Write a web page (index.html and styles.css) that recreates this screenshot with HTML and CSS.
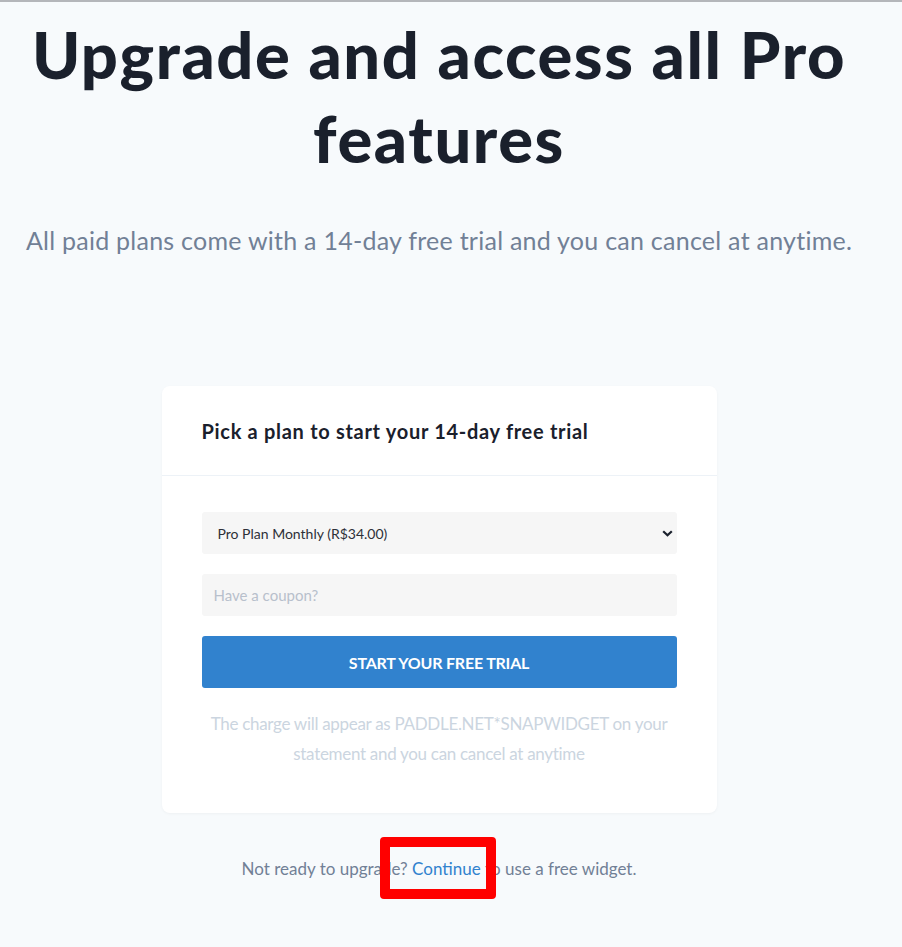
FILE: index.html
```html
<!DOCTYPE html>
<html lang="en">
<head>
<meta charset="utf-8">
<title>Upgrade</title>
<link rel="stylesheet" href="styles.css">
</head>
<body>
<div class="topline"></div>
<main class="page">
  <h1 class="title">Upgrade and access all Pro features</h1>
  <p class="subtitle">All paid plans come with a 14-day free trial and you can cancel at anytime.</p>
  <section class="card">
    <div class="card-head">Pick a plan to start your 14-day free trial</div>
    <div class="card-body">
      <div class="select">
        <span>Pro Plan Monthly (R$34.00)</span>
        <svg class="chev" width="11" height="7" viewBox="0 0 11 7"><path d="M1.2 1.2 L5.5 5.3 L9.8 1.2" fill="none" stroke="#1a202c" stroke-width="2.2"/></svg>
      </div>
      <div class="coupon">Have a coupon?</div>
      <button class="cta">START YOUR FREE TRIAL</button>
      <p class="note">The charge will appear as PADDLE.NET*SNAPWIDGET on your statement and you can cancel at anytime</p>
    </div>
  </section>
  <p class="footer">Not ready to upgrade? <span class="link-wrap"><a class="link">Continue</a><span class="mark"></span></span> to use a free widget.</p>
</main>
</body>
</html>
```

FILE: styles.css
```css
html, body {
  margin: 0;
  padding: 0;
  background: #f7fafc;
}
body {
  font-family: "Lato", "Noto Sans", sans-serif;
  color: #1a202c;
}
.topline {
  height: 2px;
  background: #b4b6ba;
}
.page {
  width: 878px;
  padding-bottom: 65px;
  display: flex;
  flex-direction: column;
  align-items: center;
}
.title {
  margin: 10px 0 0;
  width: 840px;
  text-align: center;
  font-size: 65px;
  line-height: 84px;
  font-weight: 900;
  letter-spacing: 1.6px;
}
.subtitle {
  margin: 42px 0 0;
  font-size: 25px;
  line-height: 36px;
  color: #718096;
  letter-spacing: 0.25px;
}
.card {
  margin-top: 128px;
  width: 555px;
  background: #fff;
  border-radius: 8px;
  box-shadow: 0 1px 3px rgba(0,0,0,0.04);
}
.card-head {
  padding: 30px 40px 29px;
  font-size: 20px;
  line-height: 30px;
  font-weight: 700;
  border-bottom: 1px solid #edf2f7;
  letter-spacing: 0.7px;
}
.card-body {
  padding: 36px 40px 44px;
  display: flex;
  flex-direction: column;
}
.select {
  height: 42px;
  background: #f6f6f6;
  border-radius: 3px;
  display: flex;
  align-items: center;
  justify-content: space-between;
  padding: 0 4px 0 16px;
  font-size: 14px;
  color: #2d3038;
}
.chev {
  display: block;
}
.coupon {
  margin-top: 20px;
  height: 42px;
  background: #f6f6f6;
  border-radius: 3px;
  display: flex;
  align-items: center;
  padding: 0 12px;
  font-size: 15px;
  color: #b8c0cc;
}
.cta {
  margin-top: 20px;
  height: 52px;
  border: 0;
  border-radius: 3px;
  background: #3182ce;
  color: #fff;
  font-family: inherit;
  font-size: 16px;
  font-weight: 700;
  letter-spacing: -0.2px;
}
.note {
  margin: 21px 0 0;
  text-align: center;
  font-size: 17px;
  line-height: 30px;
  color: #cbd5e0;
  letter-spacing: -0.3px;
}
.footer {
  margin: 43px 0 0;
  font-size: 17px;
  line-height: 26px;
  color: #718096;
}
.link-wrap {
  position: relative;
  display: inline-block;
}
.link {
  color: #3182ce;
}
.mark {
  position: absolute;
  left: -32px;
  top: -19px;
  width: 116px;
  height: 62px;
  box-sizing: border-box;
  border: 10px solid #ff0000;
  border-radius: 4px;
}
```
